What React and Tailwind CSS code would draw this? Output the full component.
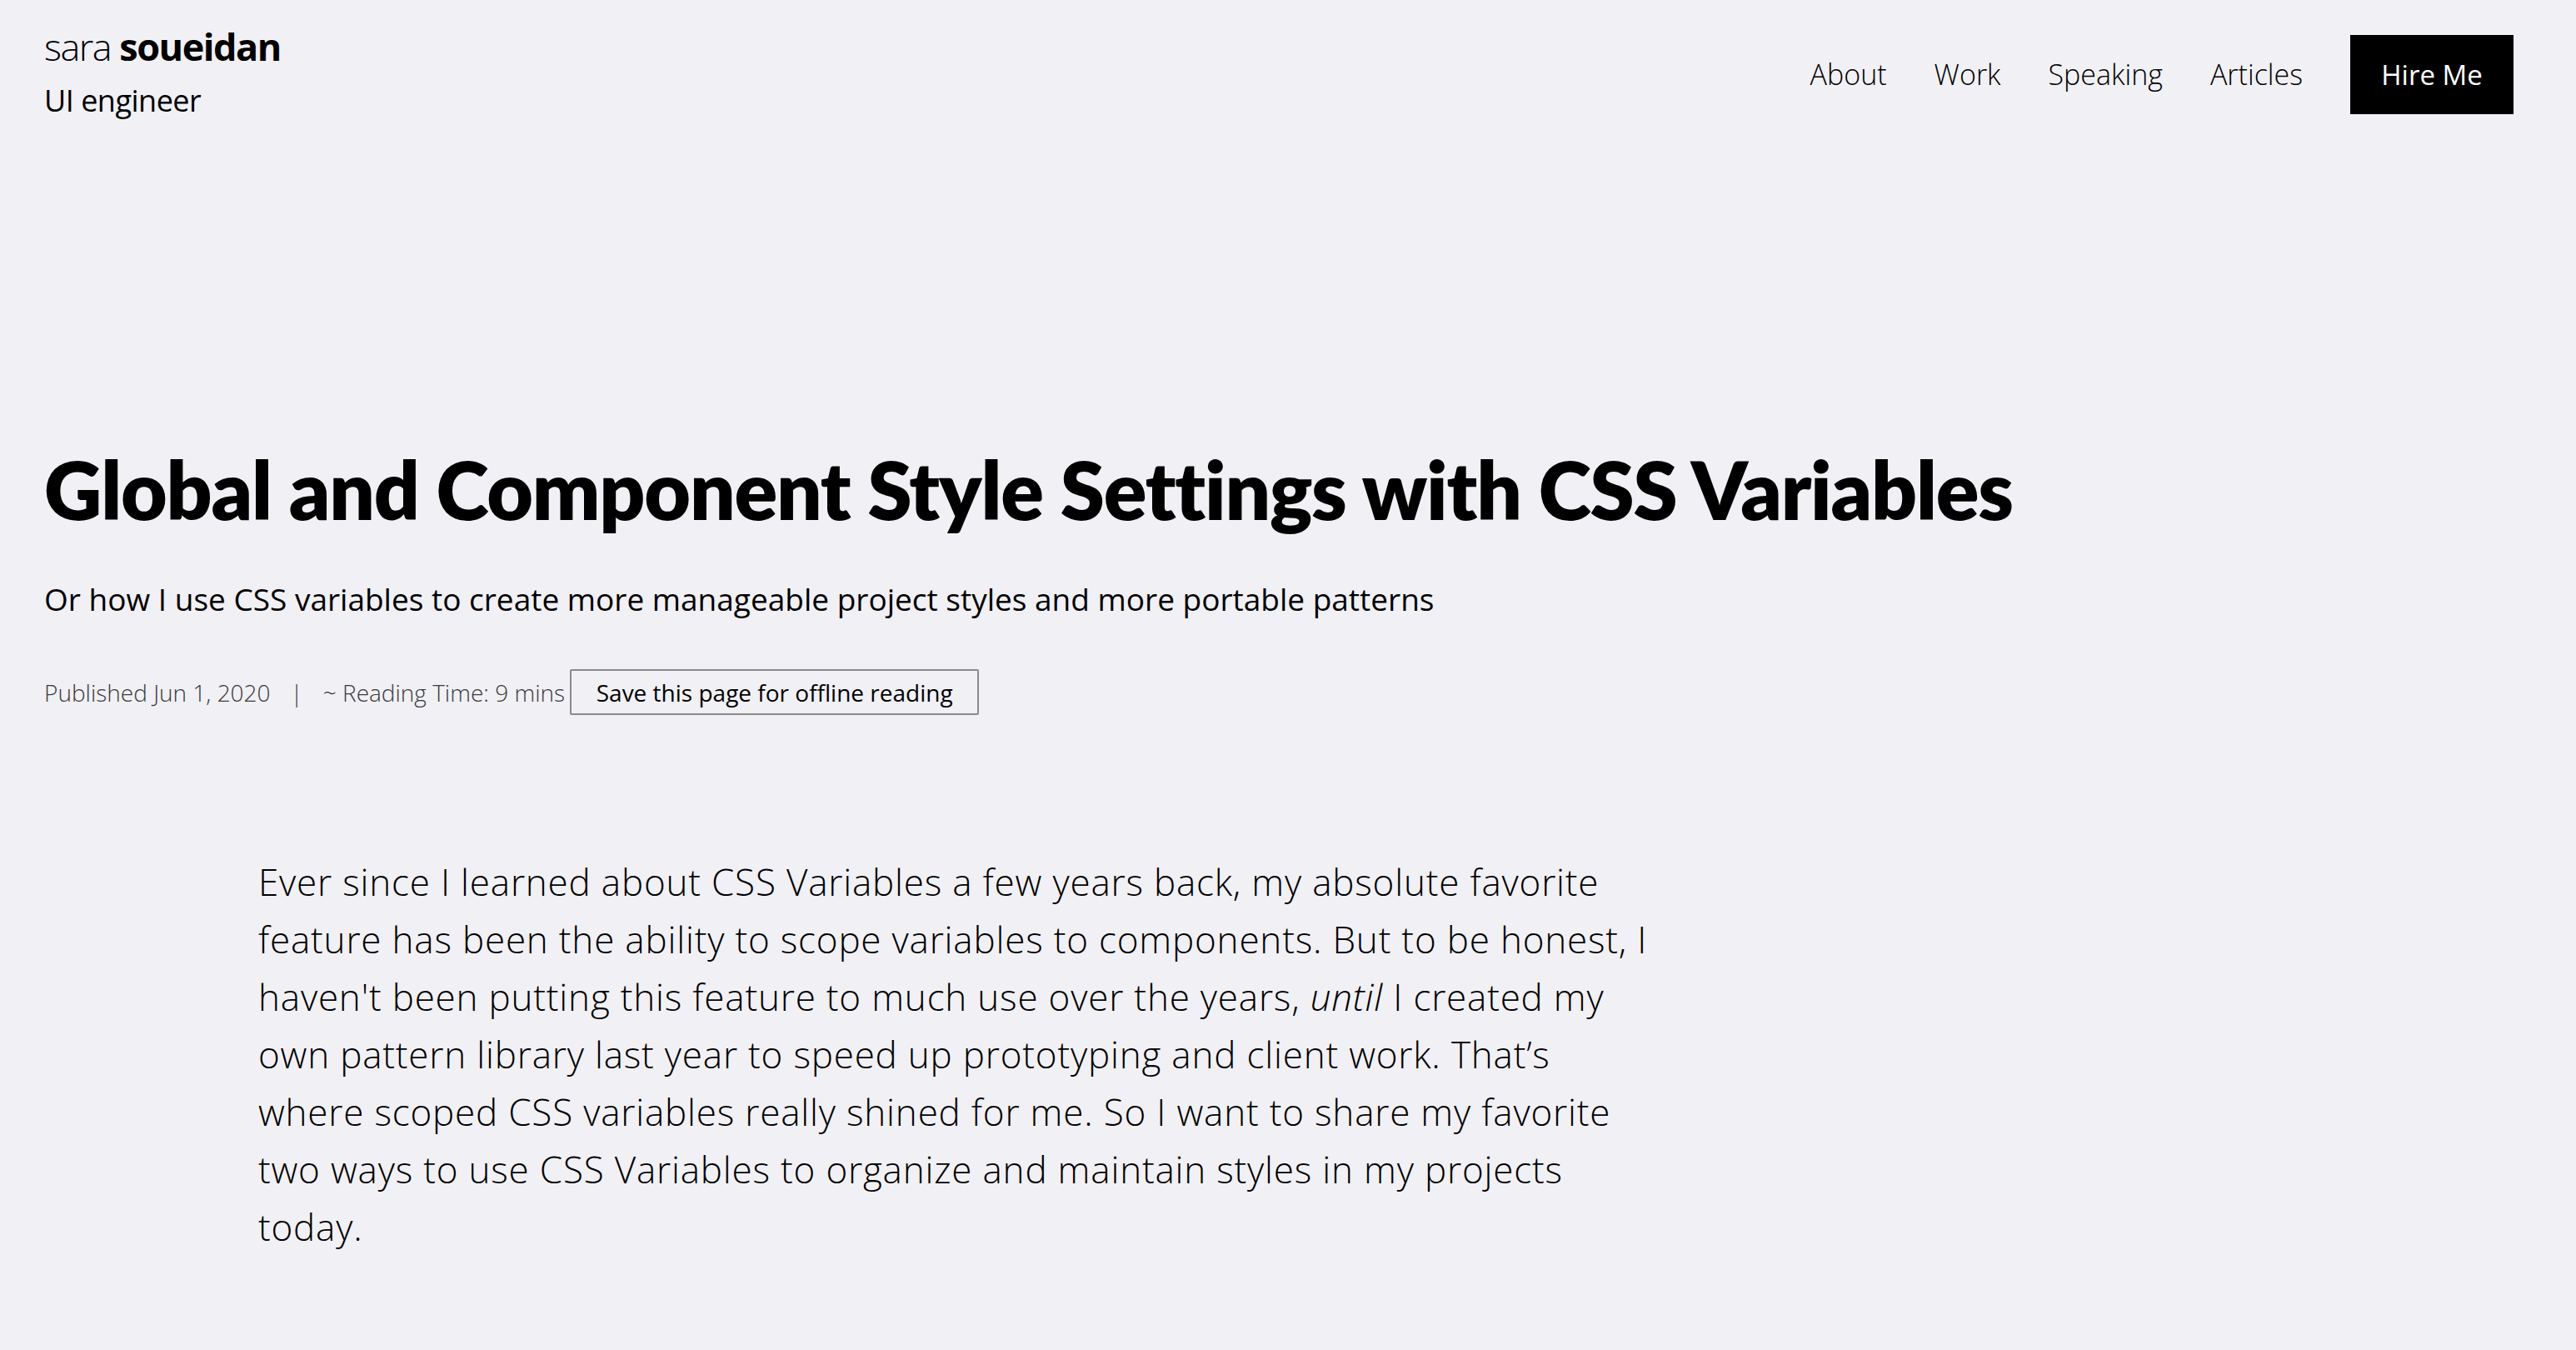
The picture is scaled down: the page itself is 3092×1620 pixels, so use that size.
export default function App() {
  const font = { fontFamily: '"Open Sans", "Noto Sans", sans-serif' };
  const titleFont = { fontFamily: 'Lato, "Open Sans", sans-serif' };

  return (
    <div className="min-h-screen bg-[#f1f0f5] text-black" style={font}>
      <header className="flex items-start justify-between pl-[53px] pr-[75px] pt-[30px]">
        <a href="#" className="block">
          <div className="text-[45px] leading-[52px] tracking-[-1.5px]">
            <span className="font-light">sara </span>
            <span className="font-bold">soueidan</span>
          </div>
          <div className="mt-[17px] text-[36px] leading-[44px] tracking-[-0.5px]">
            UI engineer
          </div>
        </a>

        <nav className="mt-[12px] flex items-center">
          <a href="#" className="mr-[57px] text-[34px] font-light">About</a>
          <a href="#" className="mr-[57px] text-[34px] font-light">Work</a>
          <a href="#" className="mr-[57px] text-[34px] font-light">Speaking</a>
          <a href="#" className="mr-[57px] text-[34px] font-light">Articles</a>
          <a
            href="#"
            className="flex h-[95px] w-[196px] items-center justify-center bg-black text-[33px] font-medium text-white"
          >
            Hire Me
          </a>
        </nav>
      </header>

      <main className="px-[53px]">
        <h1
          className="mt-[384px] text-[96px] font-extrabold leading-[120px] tracking-[-1.2px]"
          style={titleFont}
        >
          Global and Component Style Settings with CSS Variables
        </h1>
        <p className="mt-[48px] text-[37px] font-medium leading-[48px]">
          Or how I use CSS variables to create more manageable project styles
          and more portable patterns
        </p>

        <div className="mt-[60px] flex items-center text-[28px] font-light text-[#3a3a3a]">
          <span>Published Jun 1, 2020</span>
          <span className="mx-[24px]">|</span>
          <span>~ Reading Time: 9 mins</span>
          <button className="ml-[6px] flex h-[55px] w-[491px] items-center justify-center rounded-[2px] border-2 border-[#8a8a8a] text-[28px] font-medium text-black">
            Save this page for offline reading
          </button>
        </div>

        <article className="mt-[166px] pl-[257px]">
          <p className="w-[1680px] text-[44px] font-light leading-[69px] tracking-[0.8px]">
            Ever since I learned about CSS Variables a few years back, my
            absolute favorite feature has been the ability to scope variables
            to components. But to be honest, I haven't been putting this
            feature to much use over the years, <em>until</em> I created my own
            pattern library last year to speed up prototyping and client work.
            That’s where scoped CSS variables really shined for me. So I want
            to share my favorite two ways to use CSS Variables to organize and
            maintain styles in my projects today.
          </p>
        </article>
      </main>
    </div>
  );
}
